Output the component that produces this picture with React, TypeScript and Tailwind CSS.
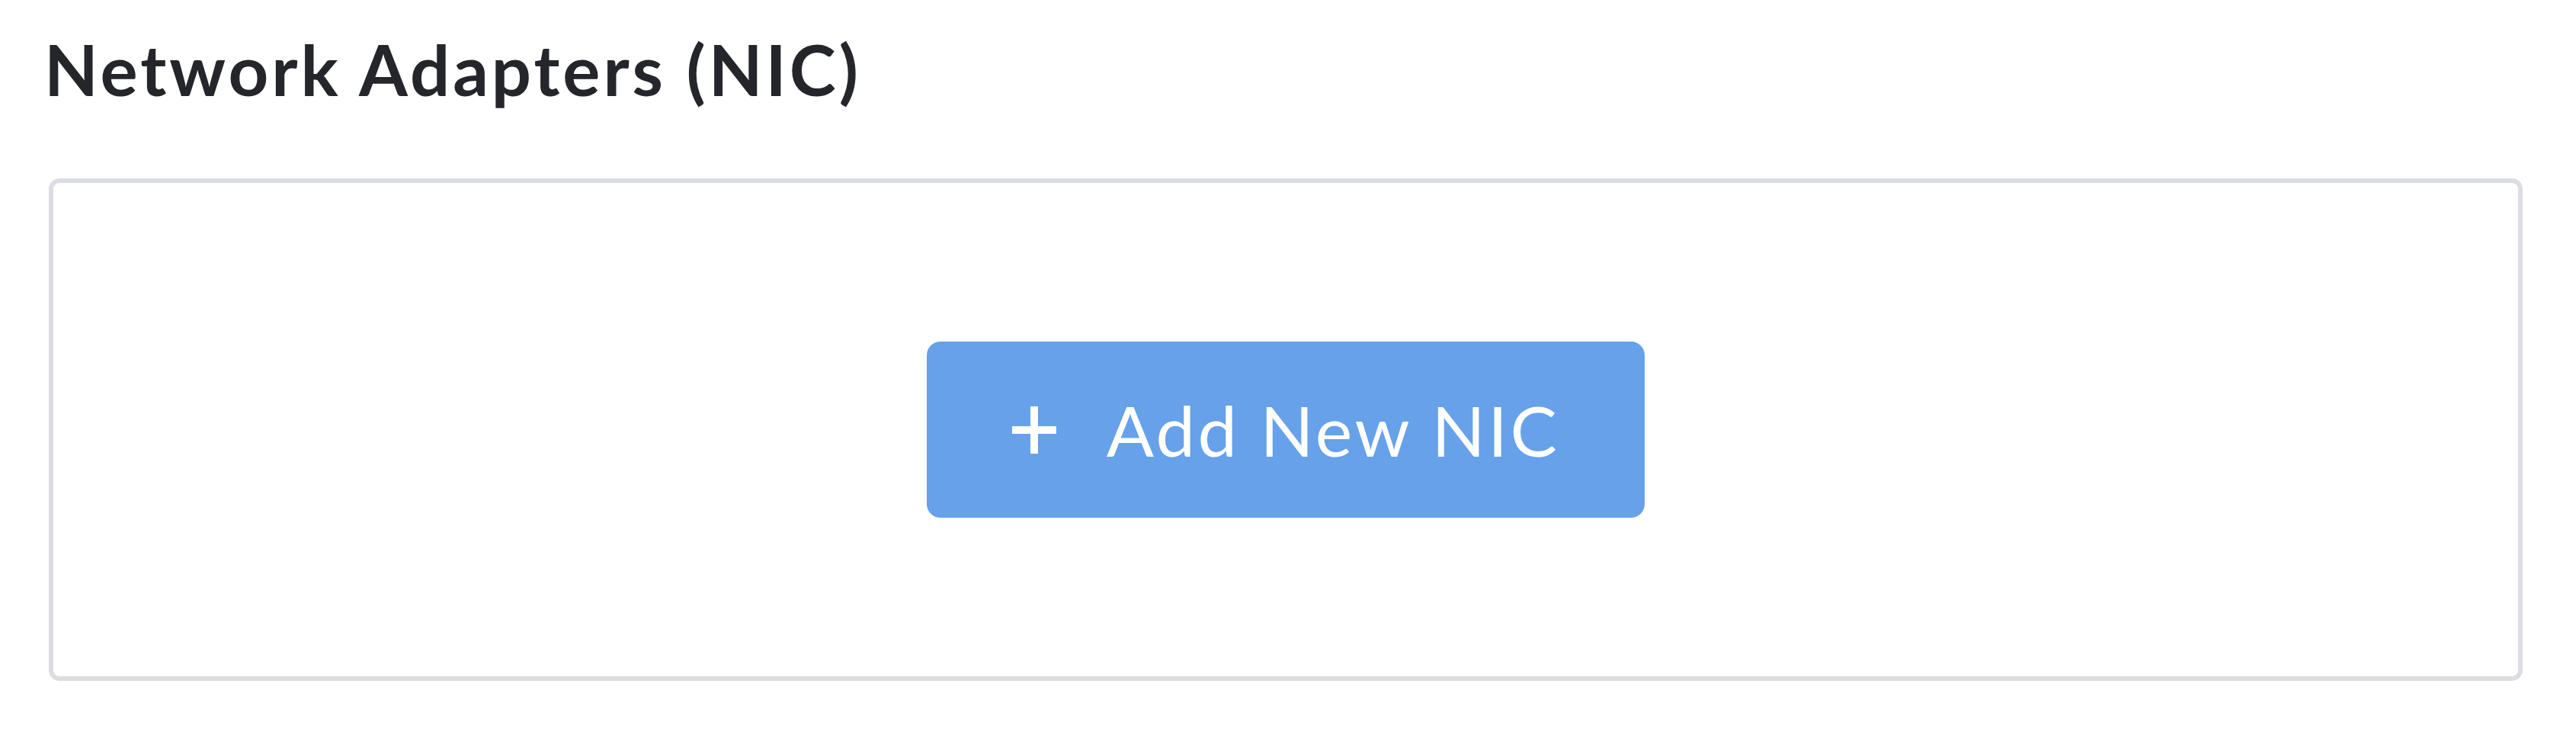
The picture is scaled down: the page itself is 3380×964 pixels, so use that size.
export default function App() {
  return (
    <div className="min-h-[964px] w-[3380px] bg-white pl-[64px] pr-[70px] pt-[45px] font-['Lato',sans-serif]">
      <h2 className="-ml-[6px] text-[92px] font-bold leading-none tracking-[4px] text-[#24262b]">
        Network Adapters (NIC)
      </h2>
      <div className="mt-[97px] flex h-[659px] w-[3246px] items-center justify-center rounded-[14px] border-[6px] border-[#dcdde2]">
        <button className="flex h-[231px] w-[942px] items-center justify-center gap-[66px] rounded-[18px] bg-[#66a1e9] text-white">
          <svg width="58" height="62" viewBox="0 0 58 62" className="shrink-0">
            <rect x="24" y="0" width="10" height="62" fill="white" />
            <rect x="0" y="26" width="58" height="10" fill="white" />
          </svg>
          <span className="text-[92px] font-normal leading-none tracking-[3.5px]">Add New NIC</span>
        </button>
      </div>
    </div>
  );
}
